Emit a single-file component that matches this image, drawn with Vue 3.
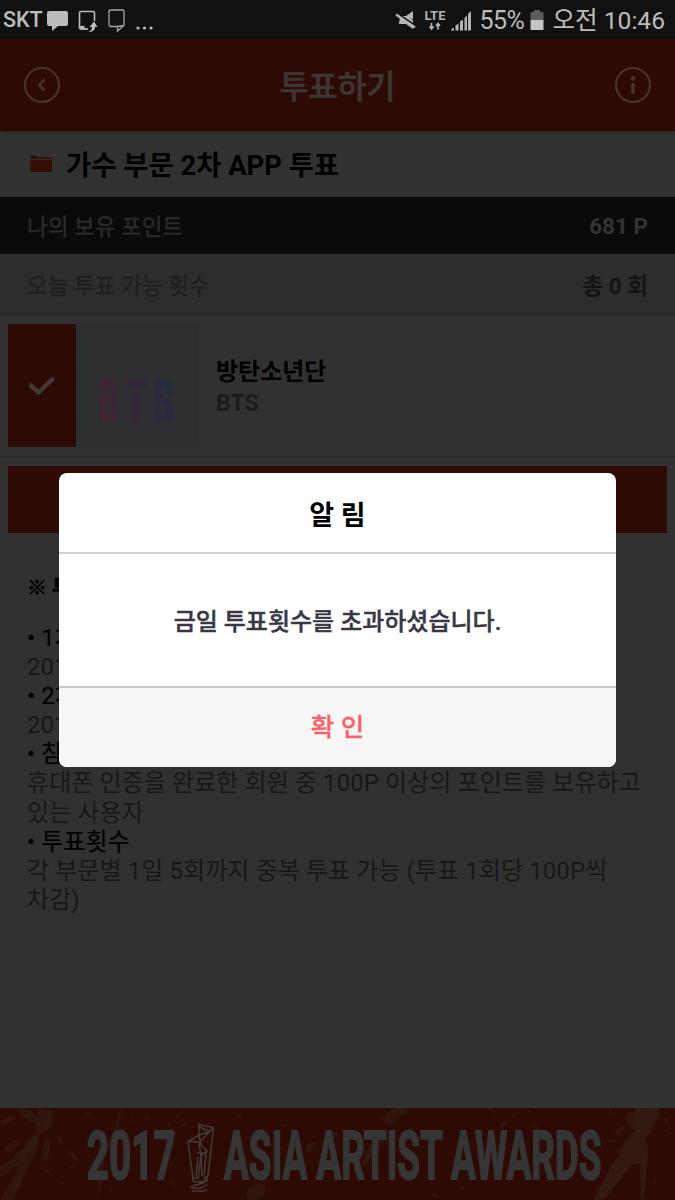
<script setup>
import { ref } from 'vue'

const showAlert = ref(true)

const notices = [
  { title: '1차 투표기간', lines: ['2017'] },
  { title: '2차 투표기간', lines: ['2017'] },
  { title: '참여방법', lines: ['휴대폰 인증을 완료한 회원 중 100P 이상의 포인트를 보유하고', '있는 사용자'] },
  { title: '투표횟수', lines: ['각 부문별 1일 5회까지 중복 투표 가능 (투표 1회당 100P씩', '차감)'] }
]

// x, y, rx, ry, rotation of the paint drops on the banner
const drops = [
  [8, 12, 7, 3, -20], [30, 8, 12, 5, 30], [48, 16, 8, 4, -60], [12, 38, 9, 4, -40],
  [20, 50, 11, 6, -50], [32, 36, 9, 6, -65], [46, 42, 4, 12, 10], [6, 60, 12, 5, -40],
  [18, 74, 8, 4, -60], [60, 32, 5, 2, 70], [73, 48, 7, 2, 50], [47, 63, 4, 2, 20],
  [72, 59, 3, 1, 10], [63, 75, 2, 1, 0], [88, 6, 3, 2, 0], [132, 12, 2, 1, 40],
  [147, 9, 3, 1, 60], [178, 8, 9, 1, -55], [183, 17, 5, 1, -30], [170, 19, 4, 1, 70],
  [256, 84, 11, 7, -35], [240, 9, 3, 1, 50], [310, 39, 6, 3, -50], [332, 28, 7, 3, -30],
  [302, 61, 2, 1, 0], [323, 74, 3, 1, 30], [283, 18, 2, 1, 0], [287, 70, 2, 1, 60],
  [396, 5, 11, 5, -20], [388, 12, 8, 3, 15], [374, 41, 13, 5, -50], [366, 52, 7, 3, -60],
  [492, 3, 5, 1, 35], [503, 17, 6, 2, -55], [515, 7, 4, 1, -30], [536, 19, 5, 1, 60],
  [529, 3, 3, 1, 40], [611, 3, 5, 1, 80], [620, 23, 7, 3, -45], [631, 10, 7, 5, -60],
  [642, 14, 12, 9, -60], [650, 6, 11, 7, 10], [666, 13, 5, 1.5, 60], [634, 32, 12, 7, -35],
  [640, 39, 9, 5, -50], [645, 48, 3, 14, 5], [625, 40, 10, 4, -45], [668, 24, 4, 1, 30],
  [612, 33, 4, 1, 0], [597, 80, 2, 1, 0], [435, 87, 3, 1, 20], [462, 80, 2, 1, 0],
  [655, 74, 2, 1, 0], [571, 12, 2, 1, 0], [111, 81, 3, 1, 50], [173, 75, 4, 1, 60]
]
</script>

<template>
  <div class="screen">
    <div class="status-bar">
      <span class="carrier">SKT</span>
      <svg class="left-icons" width="136" height="38" viewBox="0 0 136 38">
        <path d="M7 10h17q2 0 2 2v11q0 2-2 2H16l-6 5v-5H7q-2 0-2-2V12q0-2 2-2z" fill="#bcbcbc" />
        <path d="M52.500 20v-8q0-1.500-1.500-1.500H39q-1.500 0-1.500 1.500v14.500q0 1.500 1.500 1.500h7" fill="none" stroke="#bcbcbc" stroke-width="1.600" />
        <path d="M38 25h5l-1 1.500 4 2H38z" fill="#bcbcbc" />
        <path d="M46 31q4-1 4-5h-2.500l4.500-5.500 3.500 5.500H53q0 5-7 5z" fill="#bcbcbc" />
        <path d="M68.500 9h12q1.500 0 1.500 1.500v14l-6.500 5.500v-4.500h-7q-1.500 0-1.500-1.500V10.500q0-1.500 1.500-1.500zM75.500 25.500l6.500-1" fill="none" stroke="#a5a5a5" stroke-width="1.300" />
        <circle cx="96" cy="27" r="1.600" fill="#bcbcbc" />
        <circle cx="102.500" cy="27" r="1.600" fill="#bcbcbc" />
        <circle cx="109" cy="27" r="1.600" fill="#bcbcbc" />
      </svg>
      <span class="spacer"></span>
      <svg class="right-icons" width="84" height="38" viewBox="0 0 84 38">
        <path d="M5 15h6l7-5v8l-3-1 3 2v9l-7-5H4z" fill="#b5b5b5" />
        <path d="M0 11.500l20 13" stroke="#111" stroke-width="2.500" />
        <path d="M1 13.500l19 13" stroke="#b5b5b5" stroke-width="2.400" />
        <text x="29.500" y="19" textLength="21" lengthAdjust="spacingAndGlyphs" class="lte">LTE</text>
        <path d="M36.500 22v6M34.500 25.500l2 2.500 2-2.500M43 28.500v-6M41 25l2-2.500 2 2.500" fill="none" stroke="#b5b5b5" stroke-width="1.700" />
        <path d="M56 29.500v-1l3-2v3zM60.500 29.500v-5l3-2v7zM65 29.500v-9l3-2v11zM69.500 29.500v-12.500l2.500-2.500v15zM73 29.500V13l3-3v19.500z" fill="#b5b5b5" />
      </svg>
      <span class="percent">55%</span>
      <svg class="battery" width="14" height="22" viewBox="0 0 14 22">
        <path d="M4 1h6v2h3.500v8H.5V3H4z" fill="#5c5c5c" />
        <path d="M.5 11h13v10H.5z" fill="#c4c4c4" />
      </svg>
      <span class="clock">오전 10:46</span>
    </div>

    <header class="header">
      <svg class="round-icon" viewBox="0 0 38 38">
        <circle cx="19" cy="19" r="17" />
        <path d="M21.500 13.500l-5.500 5.500 5.500 5.500" stroke-width="2.600" />
      </svg>
      <h1>투표하기</h1>
      <svg class="round-icon" viewBox="0 0 38 38">
        <circle cx="19" cy="19" r="17" />
        <path d="M19 18.500v8" stroke-width="3.600" stroke-linecap="round" />
        <circle cx="19" cy="12.500" r="2.300" class="dot" />
      </svg>
    </header>

    <div class="section-title">
      <svg width="23" height="18" viewBox="0 0 23 18">
        <path d="M.5 4V1.500q0-1 1-1h5l2 2H21q1 0 1 1V4z" fill="#340c06" />
        <path d="M.5 5H22v11q0 1-1 1H1.500q-1 0-1-1z" fill="#340b05" />
      </svg>
      <h2>가수 부문 2차 APP 투표</h2>
    </div>
    <div class="row points">
      <span>나의 보유 포인트</span>
      <b>681 P</b>
    </div>
    <div class="row count">
      <span>오늘 투표 가능 횟수</span>
      <b>총 0 회</b>
    </div>

    <div class="artist">
      <div class="check">
        <svg width="28" height="20" viewBox="0 0 28 20">
          <path d="M3 9.500l7.500 7L24 3.500" />
        </svg>
      </div>
      <svg class="thumb" width="123" height="123" viewBox="0 0 123 123">
        <defs>
          <linearGradient id="bts" x1="0" y1="0.700" x2="1" y2="0.300">
            <stop offset="0" stop-color="#422530" />
            <stop offset="0.500" stop-color="#35273a" />
            <stop offset="1" stop-color="#202d40" />
          </linearGradient>
        </defs>
        <text class="logo" x="39" y="97" transform="scale(0.580 1)" fill="url(#bts)" stroke="url(#bts)">BTS</text>
      </svg>
      <div class="names">
        <strong>방탄소년단</strong>
        <span>BTS</span>
      </div>
    </div>

    <div class="vote-button"></div>

    <div class="notice">
      <h3>※ 투표안내</h3>
      <template v-for="item in notices" :key="item.title">
        <p class="item">• {{ item.title }}</p>
        <p v-for="line in item.lines" :key="line">{{ line }}</p>
      </template>
    </div>

    <svg class="banner" width="675" height="92" viewBox="0 0 675 92">
      <g fill="#321a12">
        <path d="M38 0l17 3-9 17-8 8-2 16-9 19-14 29H0l16-27 6-22 13-14z" opacity="0.700" />
        <path d="M121 0l-7 20-12 28-2 12-3 30 5-15 3-25 11-25 7-25z" opacity="0.700" />
        <path d="M636 0h23l-5 18-9 14 3 12-2 30-3 18-2-2-1-35-9 2-27 35h-11l17-32 18-26 9-16-7 4z" />
        <ellipse
          v-for="(d, i) in drops"
          :key="i"
          :cx="d[0]"
          :cy="d[1]"
          :rx="d[2]"
          :ry="d[3]"
          :transform="`rotate(${d[4]} ${d[0]} ${d[1]})`"
          opacity="0.700"
        />
      </g>
      <text x="155" y="71.500" transform="scale(0.560 1)" textLength="159" lengthAdjust="spacingAndGlyphs">2017</text>
      <path
        class="trophy"
        d="M199 27V16.500l14.500 3-5.500 48-3.500 3M199 18.500l10 5 4-4M188 33.500l11-6.500 10-3-9 10-12-.5zM188 33.500l5 36.500h5l3-22-2-13M199 27l2 10 6 6-6 5 1 20M197 45h9l-2 22M198 49l-2 19M193 70q-2 4 5 4t9-4l-3-1M192 78q13-3 16-6M191 78q0 3 9 2 8-2 6-4M192 83h12l3-2"
      />
      <text x="400" y="71.500" transform="scale(0.560 1)" textLength="674" lengthAdjust="spacingAndGlyphs">ASIA ARTIST AWARDS</text>
    </svg>

    <div v-if="showAlert" class="alert">
      <div class="alert-title">알 림</div>
      <div class="alert-body">금일 투표횟수를 초과하셨습니다.</div>
      <button class="alert-ok" @click="showAlert = false">확 인</button>
    </div>
  </div>
</template>

<style>
body {
  margin: 0;
  background: #313131;
}
</style>

<style scoped>
.screen {
  position: relative;
  display: flex;
  flex-direction: column;
  width: 675px;
  height: 1200px;
  overflow: hidden;
  background: #313131;
  color: #000;
  font-family: Roboto, "Noto Sans CJK KR", sans-serif;
}

h1, h2, h3, p {
  margin: 0;
}

.status-bar {
  display: flex;
  align-items: center;
  flex: none;
  box-sizing: border-box;
  height: 39px;
  padding: 0 10px 0 3px;
  background: #111;
  color: #bcbcbc;
  white-space: nowrap;
}

.carrier {
  width: 39px;
  font-size: 21.500px;
  font-weight: 500;
}

.spacer {
  flex: 1;
}

.lte {
  font-size: 12px;
  font-weight: 700;
  fill: #b5b5b5;
}

.percent {
  font-size: 25px;
  letter-spacing: -0.500px;
  padding-top: 2px;
}

.battery {
  margin: 1px 8px 0 6px;
}

.clock {
  font-size: 24.600px;
  padding-bottom: 3px;
}

.header {
  display: flex;
  align-items: center;
  justify-content: space-between;
  flex: none;
  height: 92px;
  padding: 0 23px;
  background: #2d0a04;
  box-shadow: 0 1px 4px rgba(0, 0, 0, 0.4);
  z-index: 1;
}

.header h1 {
  padding-bottom: 2px;
  font-size: 31.500px;
  font-weight: 500;
  color: #3d3633;
  -webkit-text-stroke: 0.6px;
}

.round-icon {
  width: 38px;
  height: 38px;
  fill: none;
  stroke: #49322e;
  stroke-width: 2.200;
}

.round-icon .dot {
  fill: #49322e;
  stroke: none;
}

.section-title {
  display: flex;
  align-items: center;
  gap: 13px;
  flex: none;
  height: 66px;
  padding-left: 30px;
}

.section-title h2 {
  padding-bottom: 2px;
  font-size: 27.400px;
  font-weight: 700;
  white-space: nowrap;
}

.row {
  display: flex;
  align-items: center;
  justify-content: space-between;
  flex: none;
  box-sizing: border-box;
  padding: 0 27px;
  font-size: 22.500px;
}

.row span {
  padding-bottom: 1px;
  -webkit-text-stroke: 0.3px;
}

.points {
  height: 57px;
  background: #0a0a0a;
  color: #2b2b2b;
}

.points b {
  color: #343434;
}

.count {
  height: 62px;
  background: #2d2d2d;
  border-bottom: 2px solid #292929;
  color: #1e1e1e;
}

.count b {
  color: #141414;
}

.artist {
  display: flex;
  align-items: center;
  flex: none;
  box-sizing: border-box;
  height: 141px;
  padding: 0 8px 1px;
  border-bottom: 1px solid #292929;
}

.check {
  display: flex;
  align-items: center;
  justify-content: center;
  width: 68px;
  height: 123px;
  background: #2d0a04;
}

.check path {
  fill: none;
  stroke: #443936;
  stroke-width: 4.500;
  stroke-linecap: round;
  stroke-linejoin: round;
}

.thumb {
  background: #2d2f31;
}

.logo {
  font-size: 56px;
  font-weight: 700;
  letter-spacing: 12px;
  stroke-width: 3;
}

.names {
  display: flex;
  flex-direction: column;
  margin-left: 17px;
  padding-top: 4px;
  font-size: 24px;
  line-height: 32px;
}

.names span {
  font-size: 23px;
  font-weight: 700;
  color: #1b1b1f;
}

.vote-button {
  flex: none;
  height: 67px;
  margin: 9px 8px 0;
  background: #2d0a04;
}

.notice {
  flex: 1;
  padding: 41px 27px 0;
  font-size: 24px;
  line-height: 29.100px;
  letter-spacing: 0.080px;
  color: #171717;
  white-space: nowrap;
}

.notice h3 {
  margin-bottom: 21px;
  font-size: 20px;
  line-height: 29px;
  color: #000;
  -webkit-text-stroke: 0.7px;
}

.notice .item {
  color: #000;
  -webkit-text-stroke: 0.2px;
}

.banner {
  flex: none;
  background: #2d0a04;
}

.banner text {
  font-size: 67px;
  font-weight: 700;
  fill: #353535;
  stroke: #353535;
  stroke-width: 2;
}

.trophy {
  fill: none;
  stroke: #453a37;
  stroke-width: 1.500;
}

.alert {
  position: absolute;
  top: 473px;
  left: 59px;
  z-index: 2;
  display: flex;
  flex-direction: column;
  width: 557px;
  height: 294px;
  border-radius: 8px;
  overflow: hidden;
  background: #fff;
  text-align: center;
}

.alert-title {
  height: 79px;
  border-bottom: 2px solid #d0d0d0;
  font-size: 27px;
  font-weight: 700;
  line-height: 86px;
}

.alert-body {
  height: 132px;
  font-size: 24px;
  font-weight: 500;
  line-height: 137px;
  color: #373745;
  -webkit-text-stroke: 0.4px;
}

.alert-ok {
  flex: 1;
  padding: 0 0 6px;
  border: none;
  border-top: 2px solid #c9c9c9;
  background: #f6f6f6;
  font-family: inherit;
  font-size: 25.500px;
  font-weight: 500;
  color: #f96268;
  -webkit-text-stroke: 0.3px;
}
</style>
